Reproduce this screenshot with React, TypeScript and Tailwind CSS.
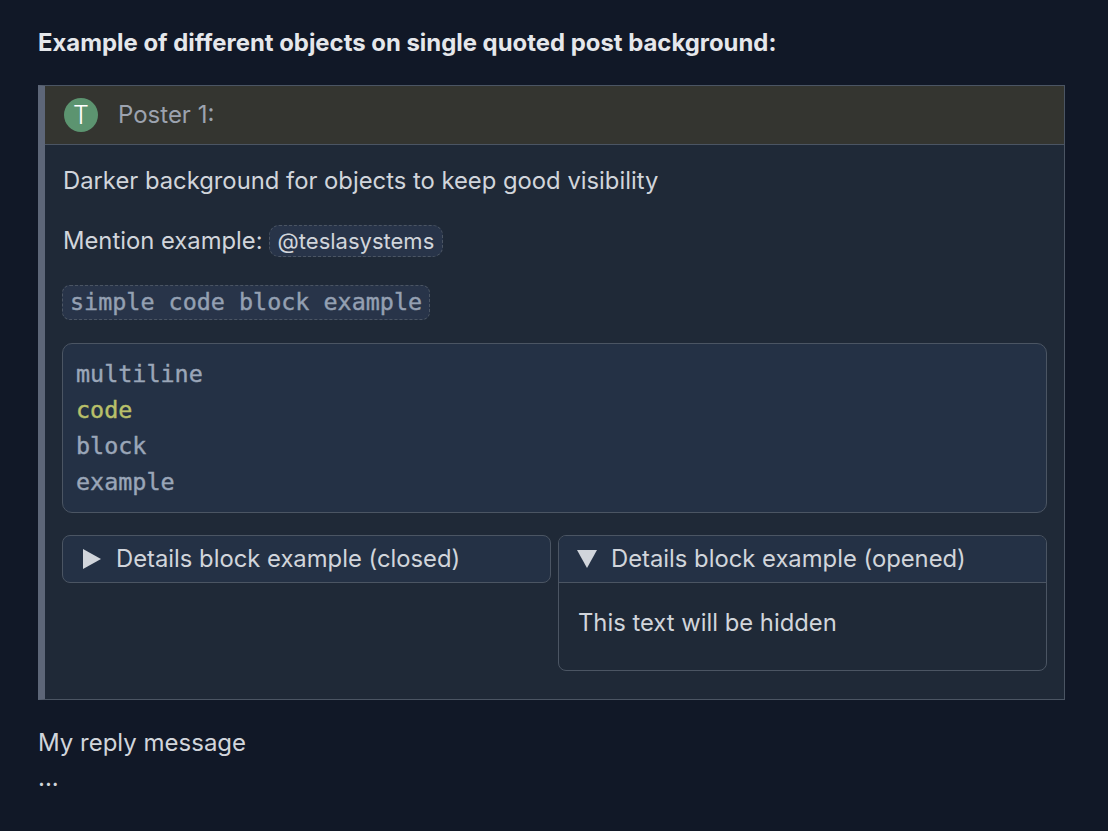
import React from 'react';

const MONO = "font-['DejaVu_Sans_Mono',monospace] [-webkit-text-stroke:0.4px_currentColor]";

const CODE_LINES = [
  { text: 'multiline', color: 'text-[#9aa6b8]' },
  { text: 'code', color: 'text-[#b9c06a]' },
  { text: 'block', color: 'text-[#9aa6b8]' },
  { text: 'example', color: 'text-[#9aa6b8]' },
];

const App: React.FC = () => {
  return (
    <div className="min-h-[831px] bg-[#111827] text-[#d1d5db] font-['Inter',sans-serif] px-[38px] pt-[28px] pb-8">
      <h2 className="text-[23.9px] font-bold text-[#e5e7eb] leading-[30px] mb-[27px]">
        Example of different objects on single quoted post background:
      </h2>

      <div className="border border-[#4b5563] border-l-[7px] border-l-[#5d6678] bg-[#1f2937] w-[1027px]">
        <div className="h-[59px] bg-[#343530] border-b border-[#4b5563] flex items-center pl-[19px]">
          <div className="w-[34px] h-[34px] rounded-full bg-[#5c9470] flex items-center justify-center text-white text-[25px] font-light leading-none">
            T
          </div>
          <span className="ml-[20px] text-[24px] text-[#9ca3af]">Poster 1:</span>
        </div>

        <div className="pl-[17px] pr-[17px] pt-[20px] pb-[28px] text-[23.8px] text-[#d1d5db]">
          <p className="leading-[32px] ml-[1px]">Darker background for objects to keep good visibility</p>

          <p className="leading-[32px] mt-[28px] ml-[1px] flex items-center">
            Mention example:
            <span className="ml-[6px] px-[8px] h-[32px] flex items-center rounded-[10px] border border-dashed border-[#4b5563] bg-[#283449] text-[22px]">
              @teslasystems
            </span>
          </p>

          <div className="mt-[27px]">
            <code className={`${MONO} inline-block px-[7px] h-[35px] leading-[33px] rounded-[8px] border border-dashed border-[#4b5563] bg-[#283449] text-[#94a0b2] text-[23.4px]`}>
              simple code block example
            </code>
          </div>

          <pre className={`${MONO} mt-[23px] rounded-[10px] border border-[#4b5563] bg-[#243145] px-[13px] py-[12px] text-[23.4px] leading-[36px]`}>
            {CODE_LINES.map(line => (
              <div key={line.text} className={line.color}>{line.text}</div>
            ))}
          </pre>

          <div className="mt-[22px] grid grid-cols-2 gap-[7px] items-start">
            <div className="h-[48px] rounded-[8px] border border-[#4b5563] bg-[#243145] flex items-center pl-[19px]">
              <svg width="20" height="22" viewBox="0 0 20 22" className="mr-[14px]">
                <path d="M1 1 L19 11 L1 21 Z" fill="#d1d5db" />
              </svg>
              <span>Details block example (closed)</span>
            </div>

            <div className="rounded-[8px] border border-[#4b5563] overflow-hidden">
              <div className="h-[47px] bg-[#243145] border-b border-[#4b5563] flex items-center pl-[18px]">
                <svg width="20" height="18" viewBox="0 0 20 18" className="mr-[14px]">
                  <path d="M0 0 L20 0 L10 18 Z" fill="#d1d5db" />
                </svg>
                <span>Details block example (opened)</span>
              </div>
              <div className="h-[87px] pl-[19px] pt-[24px] leading-[32px]">
                This text will be hidden
              </div>
            </div>
          </div>
        </div>
      </div>

      <p className="mt-[27px] text-[24px] leading-[32px] text-[#d1d5db]">My reply message</p>
      <p className="text-[24px] leading-[38px] text-[#d1d5db]">...</p>
    </div>
  );
};

export default App;
